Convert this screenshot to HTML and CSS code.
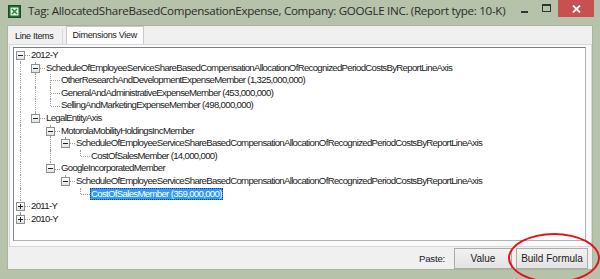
FILE: index.html
```html
<!DOCTYPE html>
<html lang="en">
<head>
    <meta charset="UTF-8">
    <title>Tag: AllocatedShareBasedCompensationExpense</title>
    <link rel="stylesheet" href="styles.css">
</head>
<body>
    <div class="window">
        <div class="titlebar">
            <svg class="app-icon" width="13" height="13" viewBox="0 0 13 13">
                <rect x="0.5" y="0.5" width="12" height="12" fill="#1e6b34" stroke="#154d25"/>
                <rect x="2.5" y="2.5" width="8" height="8" fill="#e8f3e6"/>
                <path d="M4 4 L9 9 M9 4 L4 9" stroke="#2f8a3e" stroke-width="1.6"/>
            </svg>
            <span class="title">Tag: AllocatedShareBasedCompensationExpense, Company: GOOGLE INC. (Report type: 10-K)</span>
            <div class="caption-buttons">
                <span class="cap-min"></span>
                <span class="cap-max"></span>
                <span class="cap-close">
                    <svg width="9" height="8" viewBox="0 0 9 8"><path d="M1 0.5 L8 7.5 M8 0.5 L1 7.5" stroke="#fff" stroke-width="1.8"/></svg>
                </span>
            </div>
        </div>

        <div class="client">
            <div class="tabs">
                <span class="tab">Line Items</span>
                <span class="tab selected">Dimensions View</span>
            </div>
            <div class="tab-panel">
                <div class="tree">
                    <div class="row"><span class="cell first"><i class="box minus"></i></span><span class="label">2012-Y</span></div>
                    <div class="row"><span class="cell pipe"></span><span class="cell tee"><i class="box minus"></i></span><span class="label">ScheduleOfEmployeeServiceShareBasedCompensationAllocationOfRecognizedPeriodCostsByReportLineAxis</span></div>
                    <div class="row"><span class="cell pipe"></span><span class="cell pipe"></span><span class="cell tee"></span><span class="label">OtherResearchAndDevelopmentExpenseMember (1,325,000,000)</span></div>
                    <div class="row"><span class="cell pipe"></span><span class="cell pipe"></span><span class="cell tee"></span><span class="label">GeneralAndAdministrativeExpenseMember (453,000,000)</span></div>
                    <div class="row"><span class="cell pipe"></span><span class="cell pipe"></span><span class="cell elbow"></span><span class="label">SellingAndMarketingExpenseMember (498,000,000)</span></div>
                    <div class="row"><span class="cell pipe"></span><span class="cell elbow"><i class="box minus"></i></span><span class="label">LegalEntityAxis</span></div>
                    <div class="row"><span class="cell pipe"></span><span class="cell"></span><span class="cell tee"><i class="box minus"></i></span><span class="label">MotorolaMobilityHoldingsIncMember</span></div>
                    <div class="row"><span class="cell pipe"></span><span class="cell"></span><span class="cell pipe"></span><span class="cell elbow"><i class="box minus"></i></span><span class="label">ScheduleOfEmployeeServiceShareBasedCompensationAllocationOfRecognizedPeriodCostsByReportLineAxis</span></div>
                    <div class="row"><span class="cell pipe"></span><span class="cell"></span><span class="cell pipe"></span><span class="cell"></span><span class="cell elbow"></span><span class="label">CostOfSalesMember (14,000,000)</span></div>
                    <div class="row"><span class="cell pipe"></span><span class="cell"></span><span class="cell elbow"><i class="box minus"></i></span><span class="label">GoogleIncorporatedMember</span></div>
                    <div class="row"><span class="cell pipe"></span><span class="cell"></span><span class="cell"></span><span class="cell elbow"><i class="box minus"></i></span><span class="label">ScheduleOfEmployeeServiceShareBasedCompensationAllocationOfRecognizedPeriodCostsByReportLineAxis</span></div>
                    <div class="row"><span class="cell pipe"></span><span class="cell"></span><span class="cell"></span><span class="cell"></span><span class="cell elbow"></span><span class="label selected">CostOfSalesMember (359,000,000)</span></div>
                    <div class="row"><span class="cell tee"><i class="box plus"></i></span><span class="label">2011-Y</span></div>
                    <div class="row"><span class="cell elbow"><i class="box plus"></i></span><span class="label">2010-Y</span></div>
                </div>
            </div>
            <div class="footer">
                <span class="paste-label">Paste:</span>
                <button class="btn value-btn">Value</button>
                <button class="btn build-btn">Build Formula</button>
                <span class="annotation"></span>
            </div>
        </div>
    </div>
</body>
</html>
```

FILE: styles.css
```css
body {
    margin: 0;
    background-color: #b6c2aa;
    font-family: "Liberation Sans", Arial, sans-serif;
}
.window {
    width: 600px;
    height: 279px;
    display: flex;
    flex-direction: column;
    background-color: #b6c2aa; /* marco verde Windows 8 */
    overflow: hidden;
}
.titlebar {
    height: 25px;
    display: flex;
    align-items: flex-start;
    flex-shrink: 0;
}
.app-icon {
    margin: 5px 0 0 8px;
    flex-shrink: 0;
}
.title {
    margin: 3px 0 0 7px;
    font-family: "Open Sans", "Liberation Sans", sans-serif;
    font-size: 11.6px;
    letter-spacing: -0.3px;
    color: #2b2b2b;
    white-space: nowrap;
}
.caption-buttons {
    margin-left: auto;
    display: flex;
    align-items: flex-start;
    flex-shrink: 0;
}
.cap-min {
    width: 7px;
    height: 2px;
    margin: 11px 14px 0 0;
    background: #333;
}
.cap-max {
    width: 7px;
    height: 5px;
    margin: 4px 7px 0 0;
    border: 1px solid #333;
    border-top-width: 2px;
}
.cap-close {
    width: 36px;
    height: 17px;
    margin-right: 6px;
    background: #c75050;
    display: flex;
    align-items: center;
    justify-content: center;
}
.client {
    flex: 1;
    margin: 0 7px 9px 7px;
    background: #f0f0f0;
    border: 1px solid #a9b39e;
    display: flex;
    flex-direction: column;
    font-size: 9.6px;
    color: #1a1a1a;
}
.tabs {
    height: 18px;
    display: flex;
    align-items: flex-end;
    padding-left: 1px;
}
.tab {
    height: 15px;
    padding: 0 8px 0 6px;
    line-height: 15px;
    font-size: 9px;
    letter-spacing: -0.3px;
    border-right: 1px solid #d9d9d9;
}
.tab.selected {
    height: 17px;
    line-height: 17px;
    margin-left: 3px;
    padding: 0 6px;
    background: #fdfdfd;
    border: 1px solid #c8c8c8;
    border-bottom: none;
}
.tab-panel {
    height: 197px;
    margin-left: 1px;
    padding: 2px 5px 2px 3px;
    background: #fafafa;
    border: 1px solid #d9d9d9;
}
.tree {
    height: 191px;
    padding-top: 1px;
    background: #fff;
    border: 1px solid #adb2b5;
    border-top-color: #7a7e82;
    border-left-color: #828790;
    overflow: hidden;
}
.row {
    height: 12.6px;
    display: flex;
    align-items: stretch;
    white-space: nowrap;
}
.cell {
    width: 15px;
    flex-shrink: 0;
    position: relative;
}
.cell.pipe::before,
.cell.tee::before,
.cell.elbow::before,
.cell.first::before {
    content: "";
    position: absolute;
    left: 6px;
    top: 0;
    bottom: 0;
    border-left: 1px dotted #9a9a9a;
}
.cell.elbow::before {
    bottom: 50%;
}
.cell.first::before {
    top: 50%;
}
.cell.tee::after,
.cell.elbow::after,
.cell.first::after {
    content: "";
    position: absolute;
    left: 7px;
    right: -1px;
    top: 50%;
    border-top: 1px dotted #9a9a9a;
}
.box {
    position: absolute;
    left: 2px;
    top: 2px;
    width: 7px;
    height: 7px;
    border: 1px solid #8f8f8f;
    background: linear-gradient(#ffffff, #e2e2e2);
    z-index: 1;
}
.box::before {
    content: "";
    position: absolute;
    left: 1px;
    top: 3px;
    width: 5px;
    height: 1px;
    background: #222;
}
.box.plus::after {
    content: "";
    position: absolute;
    left: 3px;
    top: 1px;
    width: 1px;
    height: 5px;
    background: #222;
}
.label {
    margin-left: 1px;
    padding: 0 1px;
    line-height: 12.6px;
    letter-spacing: -0.67px;
}
.label.selected {
    background: #3399ff;
    color: #fff;
    outline: 1px dotted #1a3d7a;
    outline-offset: -1px;
}
.footer {
    flex: 1;
    display: flex;
    align-items: center;
    justify-content: flex-end;
    gap: 4px;
    padding-right: 4px;
    position: relative;
}
.paste-label {
    margin-right: 5px;
    letter-spacing: -0.2px;
}
.btn {
    height: 21px;
    font-family: "Liberation Sans", Arial, sans-serif;
    font-size: 10px;
    color: #1a1a1a;
    background: linear-gradient(#f2f2f2, #e3e3e3);
    border: 1px solid #acacac;
    border-radius: 0;
    padding: 0;
}
.value-btn {
    width: 58px;
}
.build-btn {
    width: 72px;
}
.annotation {
    position: absolute;
    left: 500px;
    top: -14px;
    width: 88px;
    height: 46px;
    border: 2px solid #e3141b;
    border-radius: 50%;
    pointer-events: none;
}
```
